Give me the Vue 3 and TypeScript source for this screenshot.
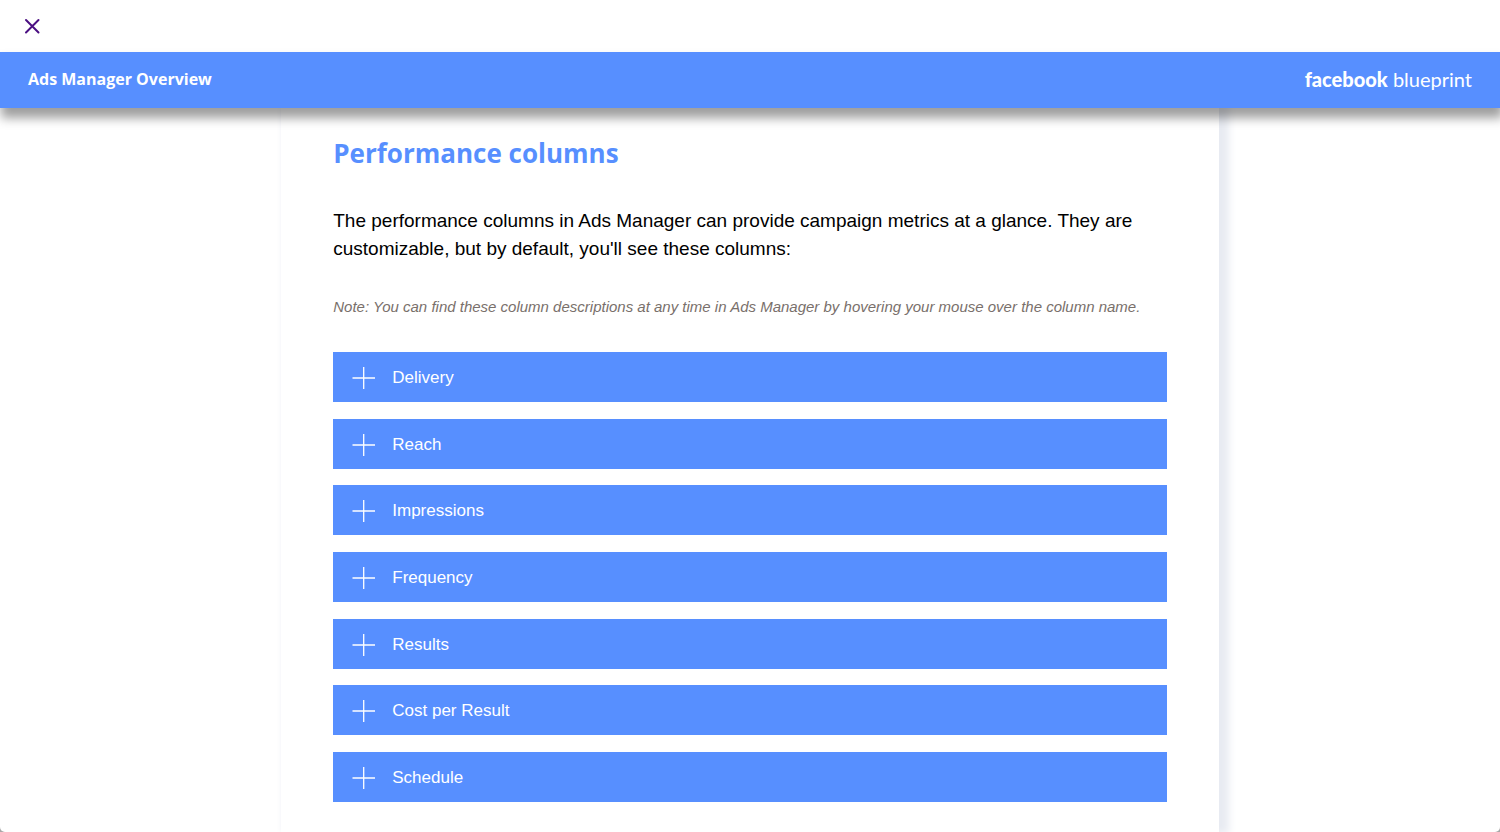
<script setup lang="ts">
import { ref } from 'vue'

const columns: string[] = [
  'Delivery',
  'Reach',
  'Impressions',
  'Frequency',
  'Results',
  'Cost per Result',
  'Schedule',
]

const selected = ref<string | null>(null)

function toggle(name: string): void {
  selected.value = selected.value === name ? null : name
}
</script>

<template>
  <div class="page">
    <div class="topbar">
      <button class="close" type="button" aria-label="Close">
        <svg width="16" height="16" viewBox="0 0 16 16" fill="none" stroke="#4b0f82" stroke-width="2" stroke-linecap="round">
          <path d="M2 2 14.500 14.500M14.500 2 2 14.500" />
        </svg>
      </button>
    </div>

    <header class="banner">
      <span class="course">Ads Manager Overview</span>
      <span class="brand"><b>facebook</b> blueprint</span>
    </header>

    <main class="sheet">
      <h1>Performance columns</h1>
      <p class="intro">
        The performance columns in Ads Manager can provide campaign metrics at a glance. They are
        customizable, but by default, you'll see these columns:
      </p>
      <p class="note">
        Note: You can find these column descriptions at any time in Ads Manager by hovering your mouse over the column name.
      </p>
      <ul class="list">
        <li v-for="name in columns" :key="name">
          <button class="bar" type="button" :aria-pressed="selected === name" @click="toggle(name)">
            <svg width="24" height="24" viewBox="0 0 24 24" stroke="#fff" stroke-width="1.3" aria-hidden="true">
              <path d="M1.500 12H24M12.700 1V23" />
            </svg>
            <span>{{ name }}</span>
          </button>
        </li>
      </ul>
    </main>
  </div>
</template>

<style>
body {
  background: #a8a8a8;
}
</style>

<style scoped>
.page {
  display: flex;
  flex-direction: column;
  min-height: 100vh;
  overflow: hidden;
  border-radius: 0 0 5px 5px;
  background: #fff;
  font-family: 'Liberation Sans', Arial, sans-serif;
  color: #000;
}

.topbar {
  display: flex;
  align-items: center;
  height: 52px;
  padding: 0 24px;
}

.close {
  display: flex;
  padding: 0;
  border: 0;
  background: none;
  cursor: pointer;
}

.banner {
  position: relative;
  z-index: 1;
  box-sizing: border-box;
  display: flex;
  align-items: center;
  justify-content: space-between;
  height: 56px;
  padding: 0 28px 2px;
  background: #578fff;
  box-shadow: 2px 9px 10px 1px rgba(0, 0, 0, 0.38);
  color: #fff;
}

.course {
  font-family: 'Open Sans', sans-serif;
  font-size: 16px;
  font-weight: 700;
}

.brand {
  font-family: Lato, 'Open Sans', sans-serif;
  font-size: 20px;
  font-weight: 400;
}

.brand b {
  font-weight: 900;
}

.sheet {
  box-sizing: border-box;
  flex: 1;
  width: 62.5%;
  margin: 0 auto;
  padding: 24px 52px 30px;
  background: #fff;
  box-shadow: 8px 0 8px 2px #e8ebf2, 0 0 6px #f3f4f7;
}

h1 {
  margin: 0;
  color: #578fff;
  font-family: 'Open Sans', sans-serif;
  font-size: 26px;
  font-weight: 800;
  font-weight: 700;
  line-height: 42px;
}

.intro {
  margin: 33px 0 0;
  font-size: 19px;
  line-height: 28px;
}

.note {
  margin: 34px 0 0;
  color: #79706b;
  font-size: 15px;
  font-style: italic;
  line-height: 20px;
}

.list {
  margin: 35px 0 0;
  padding: 0;
  list-style: none;
}

li + li {
  margin-top: 2%;
}

.bar {
  box-sizing: border-box;
  display: flex;
  align-items: center;
  gap: 17px;
  width: 100%;
  height: 50px;
  padding: 2px 18px 0;
  border: 0;
  background: #578fff;
  color: #fff;
  font-family: inherit;
  font-size: 17px;
  text-align: left;
  cursor: pointer;
}
</style>
